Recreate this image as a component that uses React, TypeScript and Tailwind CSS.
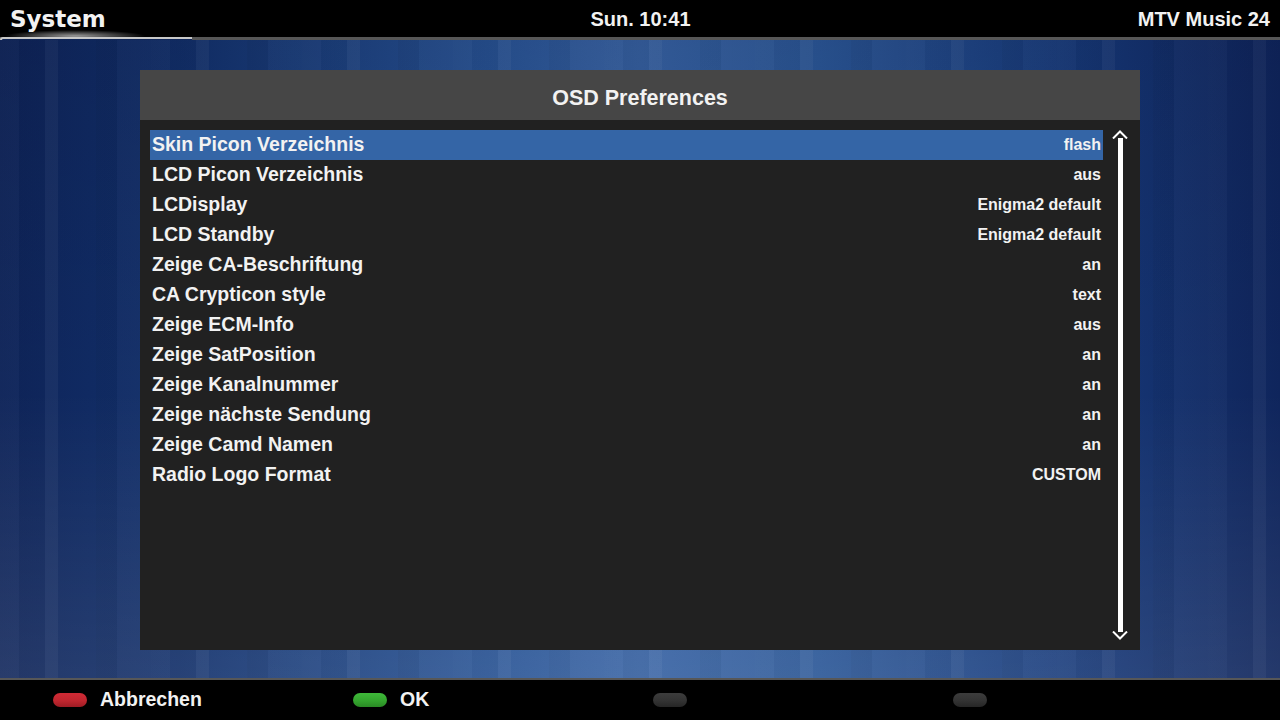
import React from "react";

const rows: { label: string; value: string }[] = [
	{ label: "Skin Picon Verzeichnis", value: "flash" },
	{ label: "LCD Picon Verzeichnis", value: "aus" },
	{ label: "LCDisplay", value: "Enigma2 default" },
	{ label: "LCD Standby", value: "Enigma2 default" },
	{ label: "Zeige CA-Beschriftung", value: "an" },
	{ label: "CA Crypticon style", value: "text" },
	{ label: "Zeige ECM-Info", value: "aus" },
	{ label: "Zeige SatPosition", value: "an" },
	{ label: "Zeige Kanalnummer", value: "an" },
	{ label: "Zeige nächste Sendung", value: "an" },
	{ label: "Zeige Camd Namen", value: "an" },
	{ label: "Radio Logo Format", value: "CUSTOM" },
];

const buttons = [
	{ pill: "bg-[linear-gradient(180deg,#d02a35_0%,#c0262f_55%,#9e1c24_100%)]", label: "Abbrechen" },
	{ pill: "bg-[linear-gradient(180deg,#3fb93a_0%,#34a52e_55%,#2a8a25_100%)]", label: "OK" },
	{ pill: "bg-[linear-gradient(180deg,#3c3c3c_0%,#333_55%,#262626_100%)]", label: "" },
	{ pill: "bg-[linear-gradient(180deg,#3c3c3c_0%,#333_55%,#262626_100%)]", label: "" },
];

const Arrow: React.FC<{ down?: boolean }> = ({ down }) => (
	<svg width="16" height="9" viewBox="0 0 16 9" className={down ? "rotate-180" : ""}>
		<path d="M1 8.5 L8 1.5 L15 8.5" fill="none" stroke="white" strokeWidth="2" />
	</svg>
);

export default function App() {
	return (
		<div className="w-[1280px] h-[720px] flex flex-col bg-black text-[#f2f2f2] font-['Liberation_Sans',Arial,sans-serif] font-bold overflow-hidden">
			{/* top bar */}
			<div className="h-[37px] flex items-center px-[10px] bg-[radial-gradient(ellipse_70px_6px_at_75px_36px,rgba(255,255,255,0.6),rgba(255,255,255,0))]">
				<div className="w-[430px] font-['DejaVu_Sans',sans-serif] text-[23px] leading-none pt-[1px]">System</div>
				<div className="flex-1 text-center text-[20px] leading-none pl-[1px]">Sun. 10:41</div>
				<div className="w-[430px] text-right text-[20px] leading-none">MTV Music 24</div>
			</div>
			<div className="h-[3px] flex bg-[#575757]">
				<div className="w-[192px] h-[3px] border-t-2 border-l-2 border-[#c8c8c8] rounded-tl-[4px] bg-[#0f2659]" />
			</div>

			{/* main */}
			<div className="flex-1 flex justify-center pt-[30px] pb-[28px] bg-[linear-gradient(180deg,rgba(0,0,20,0.1)_0%,rgba(0,0,20,0)_55%,rgba(255,255,255,0.09)_100%),repeating-linear-gradient(90deg,rgba(255,255,255,0.025)_0_19px,rgba(0,0,0,0.025)_19px_45px,rgba(255,255,255,0.045)_45px_58px,rgba(0,0,0,0)_58px_96px,rgba(0,0,0,0.035)_96px_117px,rgba(255,255,255,0.02)_117px_151px),linear-gradient(90deg,#0e2459_0%,#12306b_14%,#285394_38%,#3762a3_50%,#2b5797_64%,#173979_84%,#0f255c_100%)]">
				<div className="w-[1000px] flex flex-col">
					<div className="h-[50px] bg-[#464646] flex items-center justify-center text-[21.5px] pt-[6px]">OSD Preferences</div>
					<div className="flex-1 bg-[#212121] flex pl-[10px] pt-[10px] pb-[10px]">
						<div className="w-[953px] flex flex-col">
							{rows.map((r, i) => (
								<div
									key={r.label}
									className={`h-[30px] flex items-center justify-between px-[2px] ${i === 0 ? "bg-[#3465a6]" : ""}`}
								>
									<span className="text-[19.5px]">{r.label}</span>
									<span className="text-[16px]">{r.value}</span>
								</div>
							))}
						</div>
						<div className="w-[34px] flex flex-col items-center">
							<Arrow />
							<div className="w-[5px] flex-1 bg-white -mt-[1px] -mb-[1px]" />
							<Arrow down />
						</div>
					</div>
				</div>
			</div>

			{/* bottom bar */}
			<div className="h-[2px] bg-[#575757]" />
			<div className="h-[40px] flex items-center">
				{buttons.map((b, i) => (
					<div key={i} className="w-[300px] flex items-center pl-[53px]">
						<div className={`w-[34px] h-[14px] rounded-full ${b.pill}`} />
						<span className="ml-[13px] text-[19.5px]">{b.label}</span>
					</div>
				))}
			</div>
		</div>
	);
}
